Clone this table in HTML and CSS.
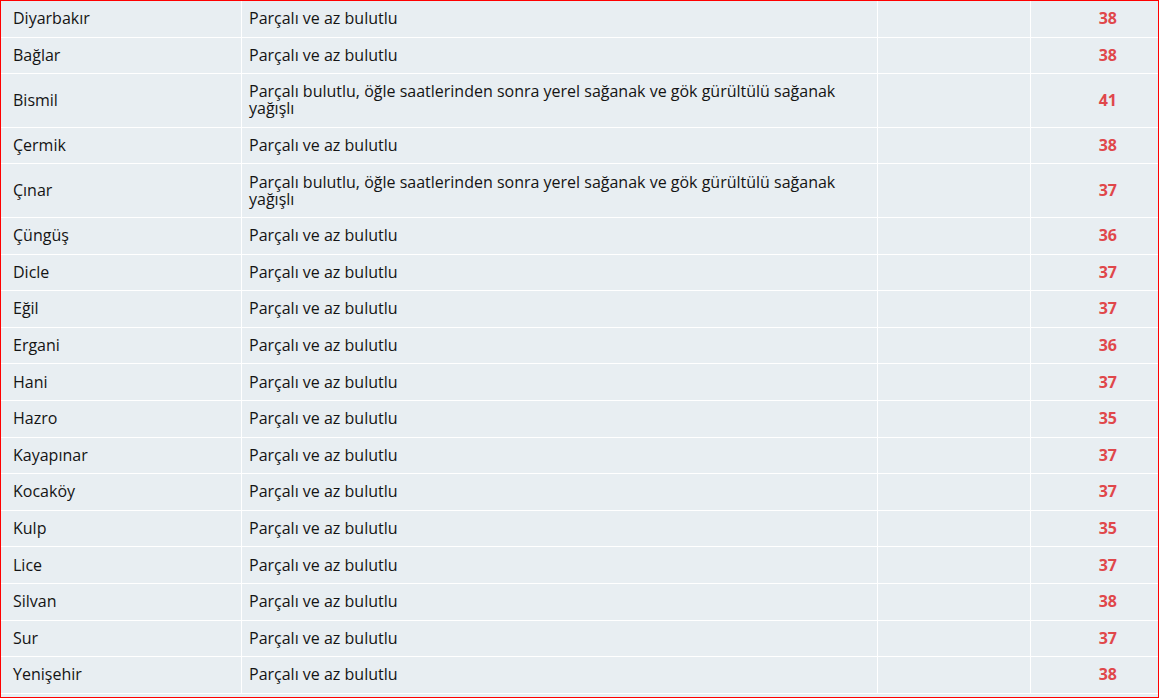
FILE: index.html
```html
<!DOCTYPE html>
<html lang="tr">
<head>
<meta charset="utf-8">
<title>Diyarbakır hava durumu</title>
<link rel="stylesheet" href="styles.css">
</head>
<body>
<div class="frame">
<table class="weather">
<tbody>
<tr><td class="c-name">Diyarbakır</td><td class="c-desc">Parçalı ve az bulutlu</td><td class="c-empty"></td><td class="c-temp">38</td></tr>
<tr><td class="c-name">Bağlar</td><td class="c-desc">Parçalı ve az bulutlu</td><td class="c-empty"></td><td class="c-temp">38</td></tr>
<tr><td class="c-name">Bismil</td><td class="c-desc">Parçalı bulutlu, öğle saatlerinden sonra yerel sağanak ve gök gürültülü sağanak yağışlı</td><td class="c-empty"></td><td class="c-temp">41</td></tr>
<tr><td class="c-name">Çermik</td><td class="c-desc">Parçalı ve az bulutlu</td><td class="c-empty"></td><td class="c-temp">38</td></tr>
<tr><td class="c-name">Çınar</td><td class="c-desc">Parçalı bulutlu, öğle saatlerinden sonra yerel sağanak ve gök gürültülü sağanak yağışlı</td><td class="c-empty"></td><td class="c-temp">37</td></tr>
<tr><td class="c-name">Çüngüş</td><td class="c-desc">Parçalı ve az bulutlu</td><td class="c-empty"></td><td class="c-temp">36</td></tr>
<tr><td class="c-name">Dicle</td><td class="c-desc">Parçalı ve az bulutlu</td><td class="c-empty"></td><td class="c-temp">37</td></tr>
<tr><td class="c-name">Eğil</td><td class="c-desc">Parçalı ve az bulutlu</td><td class="c-empty"></td><td class="c-temp">37</td></tr>
<tr><td class="c-name">Ergani</td><td class="c-desc">Parçalı ve az bulutlu</td><td class="c-empty"></td><td class="c-temp">36</td></tr>
<tr><td class="c-name">Hani</td><td class="c-desc">Parçalı ve az bulutlu</td><td class="c-empty"></td><td class="c-temp">37</td></tr>
<tr><td class="c-name">Hazro</td><td class="c-desc">Parçalı ve az bulutlu</td><td class="c-empty"></td><td class="c-temp">35</td></tr>
<tr><td class="c-name">Kayapınar</td><td class="c-desc">Parçalı ve az bulutlu</td><td class="c-empty"></td><td class="c-temp">37</td></tr>
<tr><td class="c-name">Kocaköy</td><td class="c-desc">Parçalı ve az bulutlu</td><td class="c-empty"></td><td class="c-temp">37</td></tr>
<tr><td class="c-name">Kulp</td><td class="c-desc">Parçalı ve az bulutlu</td><td class="c-empty"></td><td class="c-temp">35</td></tr>
<tr><td class="c-name">Lice</td><td class="c-desc">Parçalı ve az bulutlu</td><td class="c-empty"></td><td class="c-temp">37</td></tr>
<tr><td class="c-name">Silvan</td><td class="c-desc">Parçalı ve az bulutlu</td><td class="c-empty"></td><td class="c-temp">38</td></tr>
<tr><td class="c-name">Sur</td><td class="c-desc">Parçalı ve az bulutlu</td><td class="c-empty"></td><td class="c-temp">37</td></tr>
<tr><td class="c-name">Yenişehir</td><td class="c-desc">Parçalı ve az bulutlu</td><td class="c-empty"></td><td class="c-temp">38</td></tr>
</tbody>
</table>
</div>
</body>
</html>
```

FILE: styles.css
```css
html, body {
  margin: 0;
  padding: 0;
  background: #e8eef2;
}

.frame {
  box-sizing: border-box;
  width: 1159px;
  height: 698px;
  border: 1px solid #ff0000;
  background: #e8eef2;
  overflow: hidden;
}

.weather {
  width: 1157px;
  table-layout: fixed;
  border-collapse: separate;
  border-spacing: 0;
  font-family: "Open Sans", "DejaVu Sans", sans-serif;
  font-size: 16px;
  line-height: 17px;
  color: #141414;
}

.weather td {
  box-sizing: border-box;
  padding: 9.3px 7px;
  border-bottom: 1px solid #ffffff;
  border-right: 1px solid #ffffff;
  vertical-align: middle;
}

.weather td.c-name {
  width: 241px;
  padding-left: 12px;
}

.weather td.c-desc {
  width: 636px;
}

.weather td.c-empty {
  width: 153px;
}

.weather td.c-temp {
  width: 127px;
  border-right: none;
  text-align: right;
  padding-right: 41px;
  font-weight: 700;
  color: #e0474b;
}
```
